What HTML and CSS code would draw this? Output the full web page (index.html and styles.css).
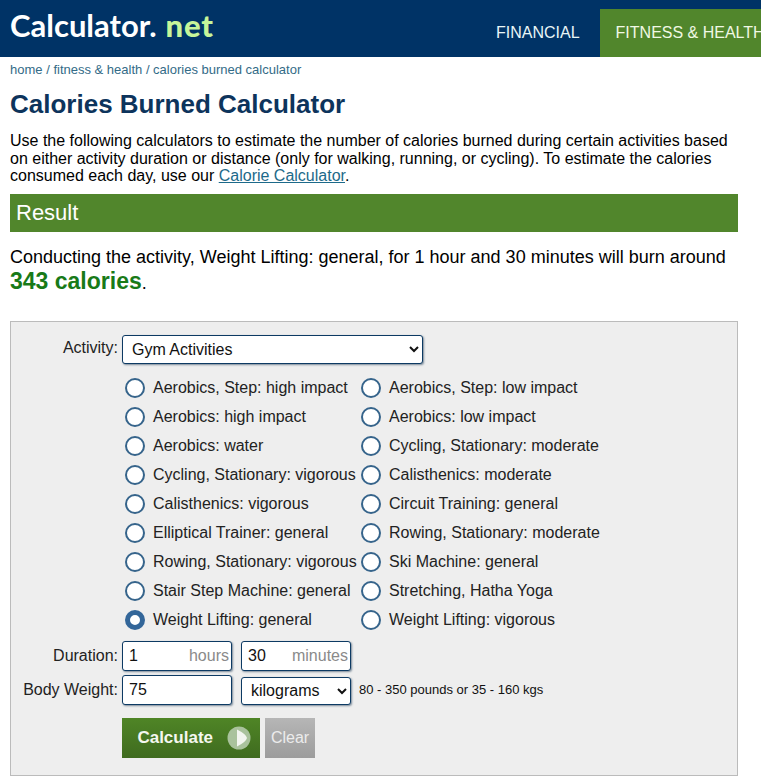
FILE: index.html
```html
<!DOCTYPE html>
<html lang="en">
<head>
<meta charset="utf-8">
<title>Calories Burned Calculator</title>
<link rel="stylesheet" href="styles.css">
</head>
<body>
<header class="top">
  <a class="logo" href="#">Calculator<span class="logo-dot">.</span><span class="logo-net">net</span></a>
  <nav class="nav">
    <a class="nav-item" href="#">FINANCIAL</a>
    <a class="nav-item nav-active" href="#">FITNESS &amp; HEALTH</a>
  </nav>
</header>
<main class="content">
  <div class="crumbs"><a href="#">home</a> / <a href="#">fitness &amp; health</a> / <a href="#">calories burned calculator</a></div>
  <h1 class="title">Calories Burned Calculator</h1>
  <p class="intro">Use the following calculators to estimate the number of calories burned during certain activities based on either activity duration or distance (only for walking, running, or cycling). To estimate the calories consumed each day, use our <a class="link" href="#">Calorie Calculator</a>.</p>
  <h2 class="result-bar">Result</h2>
  <p class="result-text">Conducting the activity, Weight Lifting: general, for 1 hour and 30 minutes will burn around <b class="result-num">343 calories</b>.</p>
  <form class="panel">
    <label class="lab lab-activity">Activity:</label>
    <select class="sel sel-activity"><option>Gym Activities</option></select>
    <div class="radios">
      <label class="radio"><input type="radio" name="a"><span>Aerobics, Step: high impact</span></label>
      <label class="radio"><input type="radio" name="a"><span>Aerobics, Step: low impact</span></label>
      <label class="radio"><input type="radio" name="a"><span>Aerobics: high impact</span></label>
      <label class="radio"><input type="radio" name="a"><span>Aerobics: low impact</span></label>
      <label class="radio"><input type="radio" name="a"><span>Aerobics: water</span></label>
      <label class="radio"><input type="radio" name="a"><span>Cycling, Stationary: moderate</span></label>
      <label class="radio"><input type="radio" name="a"><span>Cycling, Stationary: vigorous</span></label>
      <label class="radio"><input type="radio" name="a"><span>Calisthenics: moderate</span></label>
      <label class="radio"><input type="radio" name="a"><span>Calisthenics: vigorous</span></label>
      <label class="radio"><input type="radio" name="a"><span>Circuit Training: general</span></label>
      <label class="radio"><input type="radio" name="a"><span>Elliptical Trainer: general</span></label>
      <label class="radio"><input type="radio" name="a"><span>Rowing, Stationary: moderate</span></label>
      <label class="radio"><input type="radio" name="a"><span>Rowing, Stationary: vigorous</span></label>
      <label class="radio"><input type="radio" name="a"><span>Ski Machine: general</span></label>
      <label class="radio"><input type="radio" name="a"><span>Stair Step Machine: general</span></label>
      <label class="radio"><input type="radio" name="a"><span>Stretching, Hatha Yoga</span></label>
      <label class="radio"><input type="radio" name="a" checked><span>Weight Lifting: general</span></label>
      <label class="radio"><input type="radio" name="a"><span>Weight Lifting: vigorous</span></label>
    </div>
    <label class="lab lab-duration">Duration:</label>
    <div class="fields fields-duration">
      <div class="unit-field"><input class="inp" type="text" value="1"><span class="unit">hours</span></div>
      <div class="unit-field"><input class="inp" type="text" value="30"><span class="unit">minutes</span></div>
    </div>
    <label class="lab lab-weight">Body Weight:</label>
    <div class="fields fields-weight">
      <input class="inp inp-weight" type="text" value="75">
      <select class="sel sel-unit"><option>kilograms</option></select>
      <span class="hint">80 - 350 pounds or 35 - 160 kgs</span>
    </div>
    <div class="buttons">
      <button class="btn-calc" type="button">Calculate
        <svg class="btn-icon" width="24" height="24" viewBox="0 0 24 24" aria-hidden="true">
          <circle cx="12" cy="12" r="11.5" fill="#a9c29c"/>
          <path d="M10 3.5 Q19 8 20 12 Q19 16 10 20.5 Z" fill="#f2f5ef"/>
        </svg>
      </button>
      <button class="btn-clear" type="button">Clear</button>
    </div>
  </form>
</main>
</body>
</html>
```
FILE: styles.css
```css
* { box-sizing: border-box; }
html, body { margin: 0; padding: 0; overflow-x: hidden; }
body { font-family: "Liberation Sans", Arial, sans-serif; color: #000; background: #fff; }
a { text-decoration: none; color: inherit; }

.top { display: flex; height: 57px; background: #003366; overflow: hidden; }
.logo { flex: 0 0 480px; padding: 7px 0 0 10px; font-family: "Lato", sans-serif; font-weight: 700; font-size: 31px; line-height: 36px; color: #fff; letter-spacing: 0; }
.logo-dot { color: #fff; margin-right: 9px; }
.logo-net { color: #c6f59a; font-weight: 900; letter-spacing: 0.8px; }
.nav { display: flex; flex: none; gap: 4px; align-items: flex-end; height: 57px; }
.nav-item { display: block; height: 48px; padding: 0 16px; line-height: 47px; font-size: 16px; color: #e8f6f6; white-space: nowrap; }
.nav-active { background: #51862c; color: #f0f8e4; }

.content { padding: 0 23px 0 10px; }
.crumbs { margin-top: 5px; font-size: 13px; line-height: 16px; color: #336b87; }
.title { margin: 10px 0 0; font-size: 26px; line-height: 32px; font-weight: 700; color: #0d345c; }
.intro { margin: 12px 0 0; font-size: 16px; line-height: 17.6px; color: #000; }
.link { color: #1d6a8a; text-decoration: underline; }
.result-bar { margin: 9px 0 0; height: 38px; padding-left: 6px; background: #51862c; color: #fff; font-size: 22px; font-weight: 400; line-height: 37px; }
.result-text { margin: 13px 0 0; font-size: 18px; line-height: 25px; }
.result-num { color: #187a18; font-size: 23px; line-height: 1; }

.panel { display: grid; grid-template-columns: 107px 1fr; column-gap: 4px; margin-top: 25px; height: 455px; padding: 13px 0 0; background: #eeeeee; border: 1px solid #bbbbbb; align-content: start; }
.lab { text-align: right; font-size: 16px; color: #222; line-height: 18px; white-space: nowrap; }
.lab-activity { padding-top: 4px; }
.lab-duration { padding-top: 6px; }
.lab-weight { padding-top: 6px; }
.sel { font-family: inherit; font-size: 16px; background: #fff; color: #111; border: 1px solid #0d3a63; border-radius: 3px; box-shadow: 1px 1px 2px #7a8a99; padding: 0 0 0 5px; }
.sel-activity { width: 301px; height: 29px; }
.sel-unit { width: 110px; height: 28px; margin-top: 2px; }

.radios { grid-column: 2; display: grid; grid-template-columns: 236px 1fr; grid-auto-rows: 29px; margin-top: 10px; padding-left: 3px; }
.radio { display: flex; align-items: center; gap: 8px; font-size: 16px; color: #222; white-space: nowrap; }
.radio input { appearance: none; flex: none; width: 20px; height: 20px; margin: 0; background: #fff; border: 2px solid #36648b; border-radius: 50%; }
.radio input:checked { background: #fff; border: 5.5px solid #336699; }

.lab-duration, .fields-duration { margin-top: 6px; }
.fields { display: flex; gap: 9px; align-items: flex-start; }
.unit-field { position: relative; width: 110px; height: 30px; }
.inp { width: 110px; height: 30px; padding: 0 6px; font-family: inherit; font-size: 16px; color: #111; background: #fff; border: 1px solid #0d3a63; border-radius: 3px; box-shadow: 1px 1px 2px #7a8a99; }
.unit { position: absolute; right: 3px; top: 6px; font-size: 16px; line-height: 18px; color: #8a8a8a; }
.lab-weight, .fields-weight { margin-top: 4px; }
.hint { margin: 7px 0 0 -1px; font-size: 13px; line-height: 16px; color: #111; white-space: nowrap; }

.buttons { grid-column: 2; display: flex; gap: 5px; margin-top: 13px; }
.btn-calc { display: flex; align-items: center; justify-content: flex-end; gap: 0; width: 138px; height: 40px; padding: 0 9px 0 15px; border: 0; font-family: inherit; font-size: 17px; font-weight: 700; color: #f4f7ef; background: linear-gradient(#4f8526, #3f6b1f); }
.btn-icon { margin-left: 14px; flex: none; }
.btn-clear { width: 50px; height: 40px; padding: 0; border: 0; font-family: inherit; font-size: 16px; color: #ececec; background: linear-gradient(#b6b6b6, #9c9c9c); }
```
